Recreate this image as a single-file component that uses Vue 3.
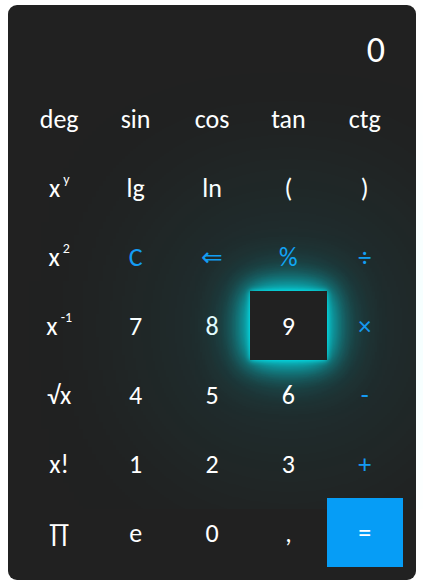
<script setup>
import { ref } from 'vue'

const display = ref('0')

const keys = [
  { label: 'deg' }, { label: 'sin' }, { label: 'cos' }, { label: 'tan' }, { label: 'ctg' },
  { label: 'x', sup: 'y' }, { label: 'lg' }, { label: 'ln' }, { label: '(' }, { label: ')' },
  { label: 'x', sup: '2' }, { label: 'C', kind: 'accent' }, { label: '⇐', kind: 'accent' }, { label: '%', kind: 'accent' }, { label: '÷', kind: 'accent' },
  { label: 'x', sup: '-1' }, { label: '7' }, { label: '8' }, { label: '9', kind: 'glow' }, { label: '×', kind: 'accent' },
  { label: '√x' }, { label: '4' }, { label: '5' }, { label: '6' }, { label: '-', kind: 'accent' },
  { label: 'x!' }, { label: '1' }, { label: '2' }, { label: '3' }, { label: '+', kind: 'accent' },
  { label: '∏' }, { label: 'e' }, { label: '0' }, { label: ',' }, { label: '=', kind: 'equals' },
]

function press(key) {
  if (key.label === 'C') display.value = '0'
  else if (/^\d$/.test(key.label) && !key.sup) {
    display.value = display.value === '0' ? key.label : display.value + key.label
  }
}
</script>

<template>
  <main class="calculator">
    <output class="display">{{ display }}</output>
    <div class="keys">
      <button
        v-for="(key, i) in keys"
        :key="i"
        type="button"
        class="key"
        :class="key.kind"
        @click="press(key)"
      ><span>{{ key.label }}<sup v-if="key.sup">{{ key.sup }}</sup></span></button>
    </div>
  </main>
</template>

<style>
body {
  background: #fff;
  overflow: hidden;
}
</style>

<style scoped>
.calculator {
  margin: 5px 7px 4px 8px;
  padding: 0 13px 13px;
  border-radius: 9px;
  background: #212121;
  color: #fff;
  font-family: Carlito, Lato, "DejaVu Sans", sans-serif;
}

.display {
  display: flex;
  align-items: center;
  justify-content: flex-end;
  height: 79px;
  padding: 10px 18px 0 0;
  box-sizing: border-box;
  font-size: 36px;
  line-height: 40px;
}

.keys {
  display: grid;
  grid-template-columns: repeat(5, 1fr);
  grid-auto-rows: 69px;
}

.key {
  display: flex;
  align-items: center;
  justify-content: center;
  min-width: 0;
  padding: 0;
  border: 0;
  background: transparent;
  color: inherit;
  font: inherit;
  font-size: 26px;
  line-height: 32px;
  cursor: pointer;
}

.key sup {
  margin-left: 3px;
  font-size: 14px;
  line-height: 0;
  vertical-align: 13px;
}

.accent {
  color: #159af3;
}

.glow {
  background: #212121;
  box-shadow: 0 0 5px #03e9f4, 0 0 25px #03e9f4, 0 0 50px #03e9f4, 0 0 200px #03e9f4;
}

.equals {
  background: #069df6;
}
</style>
